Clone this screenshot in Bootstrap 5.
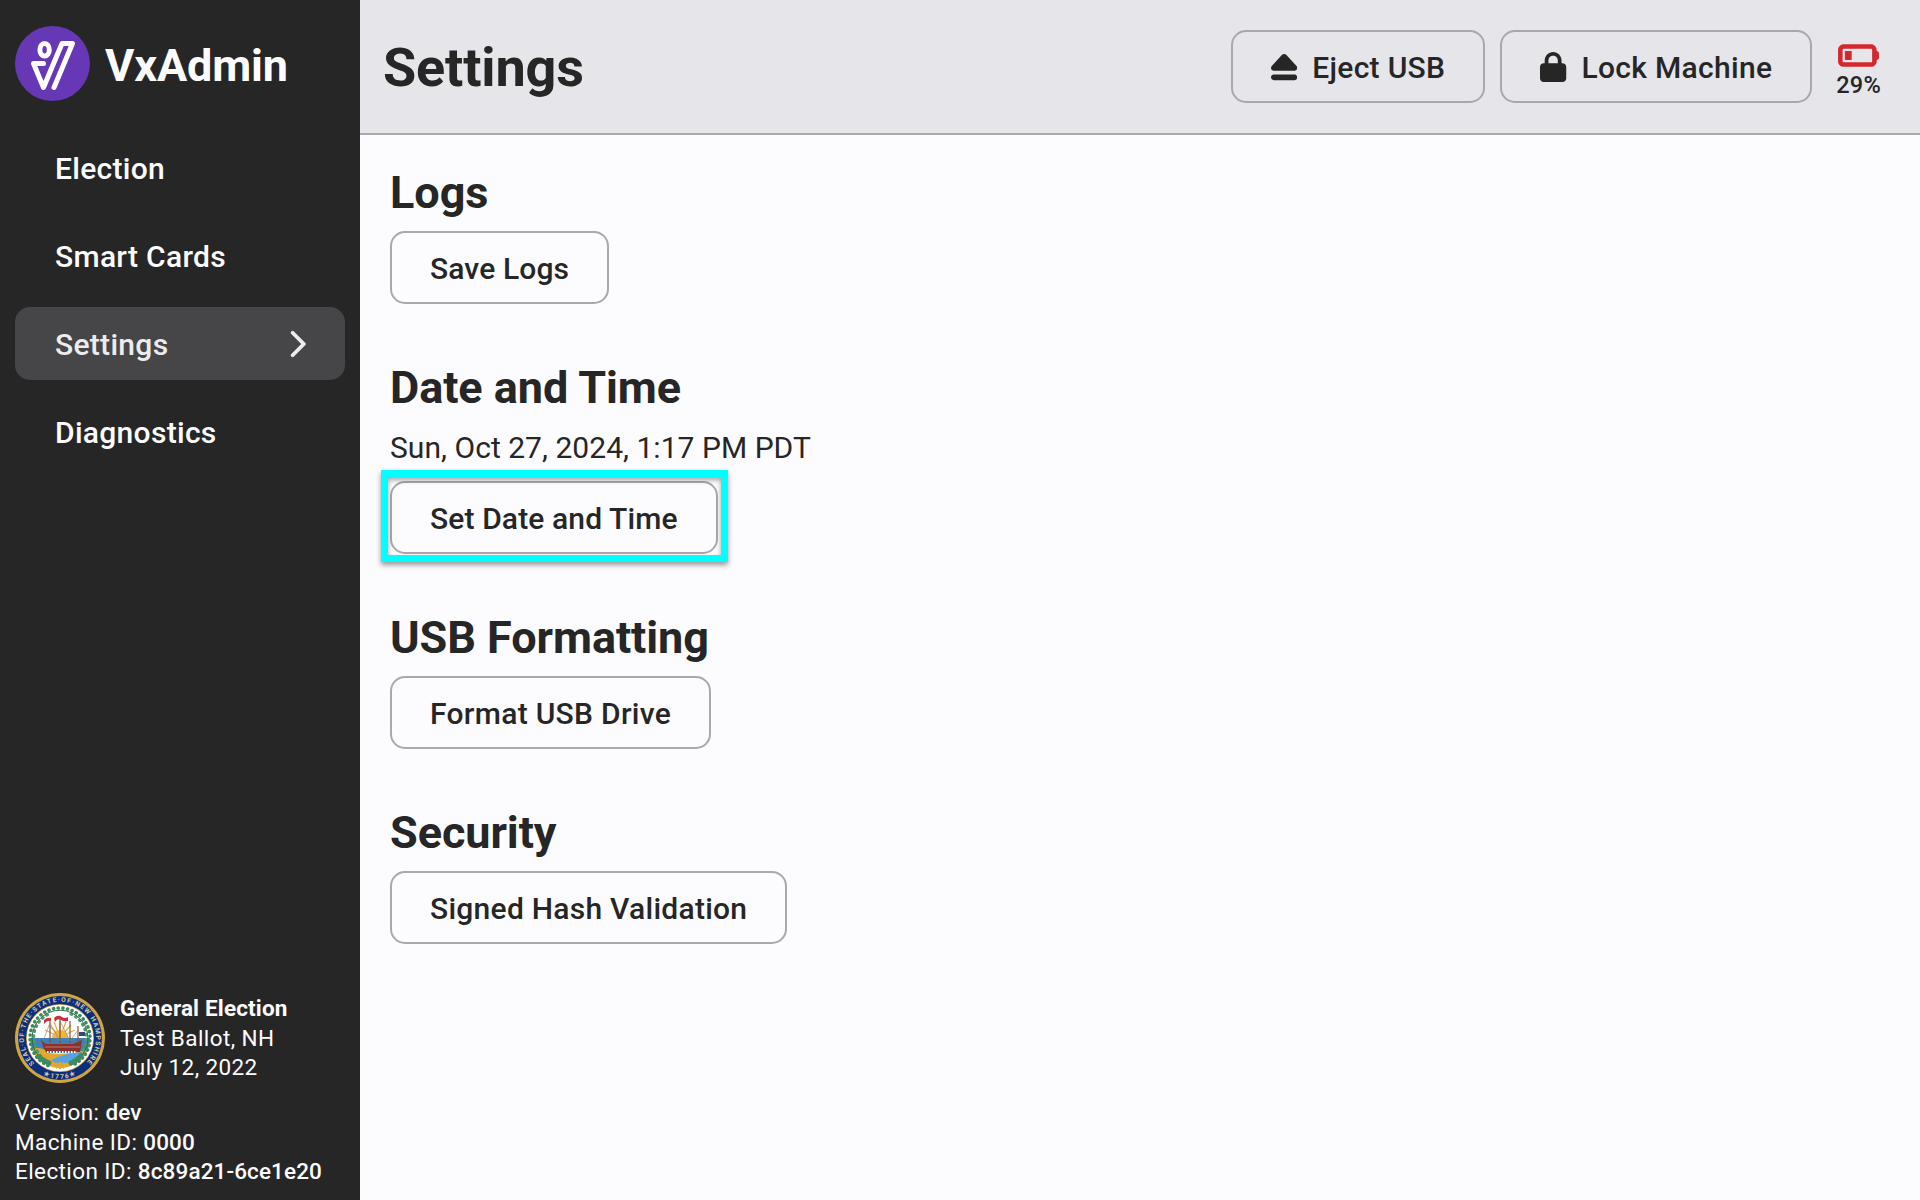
<!DOCTYPE html>
<html lang="en">
<head>
<meta charset="utf-8">
<meta name="viewport" content="width=device-width, initial-scale=1">
<title>VxAdmin - Settings</title>
<link href="https://cdn.jsdelivr.net/npm/bootstrap@5.3.0/dist/css/bootstrap.min.css" rel="stylesheet">
<style>
  body { font-family: Roboto, "Liberation Sans", sans-serif; font-size: 30px; line-height: 1.3; letter-spacing: .01em; color: #262626; background: #fcfcff; }
  svg { display: block; flex: none; }
  .side-bar { width: 360px; background: #262626; color: #fcfcff; padding: 26px 15px 0; }
  .brand-row { gap: 15px; height: 75px; }
  .brand-name { font-size: 45px; font-weight: 700; line-height: 54px; letter-spacing: -.15px; padding-top: 4px; }
  .side-nav { gap: 15px; margin-top: 30px; }
  .side-nav .nav-link { height: 73px; padding: 0 39px 0 40px; border-radius: 15px; color: #fcfcff; font-weight: 500; }
  .side-nav .nav-link.active { background: #464648; color: #ececee; }
  .btn-label { padding-top: 2px; }
  .side-foot { font-size: 22.5px; line-height: 29.25px; letter-spacing: .018em; padding-bottom: 14px; }
  .side-foot .fw-semi { font-weight: 500; letter-spacing: .005em; }
  .side-foot .fw-bold { letter-spacing: .007em; }
  .election-row { gap: 15px; margin-bottom: 15px; }
  .top-bar { height: 135px; background: #e6e5ea; border-bottom: 2px solid #a8a8ad; padding: 0 39px 0 23px; }
  .top-bar h1 { font-size: 54px; font-weight: 700; line-height: 65px; letter-spacing: -.15px; padding-top: 2px; }
  .top-tools { gap: 15px; }
  .btn-vx { --bs-btn-color: #262626; --bs-btn-border-color: #a8a8ad; --bs-btn-border-width: 2px; --bs-btn-border-radius: 15px; --bs-btn-font-size: 30px; --bs-btn-font-weight: 500; --bs-btn-padding-y: 0; --bs-btn-padding-x: 38px; --bs-btn-hover-color: #262626; --bs-btn-hover-border-color: #a8a8ad; height: 73px; gap: 15px; letter-spacing: .01em; }
  .btn-vx.tracking-tight { letter-spacing: .12px; }
  .btn-vx.tracking-mid { letter-spacing: .26px; }
  .battery { font-size: 23.5px; font-weight: 500; line-height: 26px; margin-left: 9px; padding-top: 7px; gap: 4px; letter-spacing: .01em; }
  .content { padding: 30px; }
  .content h2 { font-size: 45px; font-weight: 700; line-height: 54px; letter-spacing: -.06px; padding-top: 1px; margin-bottom: 11px; }
  .content section { margin-bottom: 56px; }
  .date-line { padding-top: 2px; margin-bottom: 14px; letter-spacing: .04px; }
  .highlight-box { inset: -11px -10px -8px -9px; border: 7px solid #0ff; box-shadow: 0 3px 5px rgba(0,0,0,.4), inset 0 3px 5px rgba(0,0,0,.35); pointer-events: none; }
  .ring-text { font: 700 6.6px Roboto, sans-serif; fill: #d5c9a0; letter-spacing: 0; }
</style>
</head>
<body>
<div class="d-flex vh-100 overflow-hidden">
  <aside class="side-bar d-flex flex-column flex-shrink-0">
    <div class="brand-row d-flex align-items-center">
      <svg width="75" height="75" viewBox="0 0 75 75">
        <circle cx="37.5" cy="37.5" r="37.5" fill="#6638b6"/>
        <g fill="none" stroke="#fff" stroke-width="5" stroke-linejoin="round" stroke-linecap="round">
          <ellipse cx="29.6" cy="23.8" rx="4.7" ry="6.3"/>
          <path d="M28.500 37.500H18.500L28.500 61.500L47 17.500H57.500L39 61.500"/>
        </g>
      </svg>
      <div class="brand-name">VxAdmin</div>
    </div>
    <nav class="side-nav nav flex-column">
      <a class="nav-link d-flex align-items-center" href="#"><span class="btn-label">Election</span></a>
      <a class="nav-link d-flex align-items-center" href="#"><span class="btn-label">Smart Cards</span></a>
      <a class="nav-link active d-flex align-items-center justify-content-between" href="#"><span class="btn-label">Settings</span>
        <svg width="18.75" height="30" viewBox="0 0 320 512" fill="currentColor"><path d="M310.6 233.4c12.5 12.5 12.5 32.8 0 45.3l-192 192c-12.5 12.5-32.8 12.5-45.3 0s-12.5-32.8 0-45.3L242.7 256 73.4 86.6c-12.5-12.5-12.5-32.8 0-45.3s32.8-12.5 45.3 0l192 192z"/></svg>
      </a>
      <a class="nav-link d-flex align-items-center" href="#"><span class="btn-label">Diagnostics</span></a>
    </nav>
    <div class="side-foot mt-auto">
      <div class="election-row d-flex align-items-center">
        <svg width="90" height="90" viewBox="0 0 90 90">
          <defs>
            <path id="ringPath" d="M19.500 70.500A36.100 36.100 0 1 1 70.500 70.500"/>
            <path id="yearPath" d="M28 82A41 41 0 0 0 62 82"/>
            <clipPath id="sealClip"><circle cx="45" cy="45" r="30"/></clipPath>
          </defs>
          <circle cx="45" cy="45" r="45" fill="#d2a544"/>
          <circle cx="45" cy="45" r="42" fill="#0c2f7c"/>
          <circle cx="45" cy="45" r="34" fill="#d2a544"/>
          <circle cx="45" cy="45" r="33.300" fill="#fff"/>
          <g clip-path="url(#sealClip)">
            <path d="M12 45H78V60H12z" fill="#3f7fb4"/>
            <path d="M12 57Q26 52 34 60Q50 63 78 55V80H12z" fill="#e2a72e"/>
            <path d="M36 67Q50 60 66 59Q62 69 50 70Q40 71 36 67z" fill="#58a2e4"/>
            <g stroke="#e2b04a" stroke-width="1.300"><path d="M45 44V28M45 44L39 29M45 44L51 29M45 44L34 32M45 44L56 32M45 44L30 37M45 44L60 37"/></g>
            <path d="M37 45a8 8 0 0 1 16 0z" fill="#efb63a"/>
          </g>
          <g fill="none" stroke-linecap="round">
            <path d="M33 72.500A30 30 0 1 1 57 72.500" stroke="#3c8a5e" stroke-width="3.600" stroke-dasharray=".1 4.600"/>
            <path d="M34 69A26.500 26.500 0 0 1 34 21M56 21A26.500 26.500 0 0 1 56 69" stroke="#4f9a6c" stroke-width="3" stroke-dasharray="1 4.200"/>
            <path d="M33 70.500A28 28 0 1 1 57 70.500" stroke="#2a6f4b" stroke-width="1"/>
            <path d="M24 64Q28 68 34 70M56 70Q62 68 66 63" stroke="#3c8a5e" stroke-width="5"/>
          </g>
          <path d="M26 47L31 51H58L67 47L65 59H31Q28 54 26 47z" fill="#8f2f2c"/>
          <path d="M30 54H65" stroke="#c98d85" stroke-width=".8"/>
          <path d="M35 50V27M45 50V24M55 50V28M63 48V33" stroke="#7d4a38" stroke-width="1.100"/>
          <path d="M28 48L35 30L45 48L45 28L55 48L63 37" fill="none" stroke="#a17461" stroke-width=".6"/>
          <path d="M29 31V27Q32 24 36 25V28Q32 27 29 31zM39 25Q43 21 47 24Q50 26 53 24V28Q49 29 46 27Q42 25 40 29z" fill="#c8303a"/>
          <path d="M64 39H70V43H64z" fill="#34467f"/>
          <path d="M32 59H62" stroke="#fff" stroke-width="2" stroke-dasharray="1.500 1.500"/>
          <path d="M41 70L49 75M49 70L41 75M45 69V76" stroke="#e2a72e" stroke-width="2"/>
          <text class="ring-text"><textPath href="#ringPath" textLength="168" lengthAdjust="spacing">SEAL·OF·THE·STATE·OF·NEW HAMPSHIRE</textPath></text>
          <text class="ring-text"><textPath href="#yearPath" textLength="34" lengthAdjust="spacing">★1776★</textPath></text>
        </svg>
        <div>
          <div class="fw-bold">General Election</div>
          <div>Test Ballot, NH</div>
          <div>July 12, 2022</div>
        </div>
      </div>
      <div>Version: <span class="fw-semi">dev</span></div>
      <div>Machine ID: <span class="fw-semi">0000</span></div>
      <div>Election ID: <span class="fw-semi">8c89a21-6ce1e20</span></div>
    </div>
  </aside>
  <main class="flex-grow-1">
    <header class="top-bar d-flex align-items-center justify-content-between">
      <h1 class="mb-0">Settings</h1>
      <div class="top-tools d-flex align-items-center">
        <button type="button" class="btn btn-vx d-flex align-items-center">
          <svg width="26.250" height="30" viewBox="0 0 448 512" fill="currentColor"><path d="M224 32c13.500 0 26.300 5.600 35.400 15.600l176 192c12.900 14 16.200 34.300 8.600 51.800S419 320 400 320H48c-19 0-36.300-11.200-43.900-28.700s-4.300-37.700 8.600-51.800l176-192C197.700 37.600 210.500 32 224 32zM0 432c0-26.500 21.500-48 48-48H400c26.500 0 48 21.500 48 48s-21.500 48-48 48H48c-26.500 0-48-21.500-48-48z"/></svg>
          <span class="btn-label">Eject USB</span>
        </button>
        <button type="button" class="btn btn-vx d-flex align-items-center">
          <svg width="26.250" height="30" viewBox="0 0 448 512" fill="currentColor"><path d="M144 144v48H304V144c0-44.200-35.800-80-80-80s-80 35.800-80 80zM80 192V144C80 64.500 144.500 0 224 0s144 64.500 144 144v48h16c35.300 0 64 28.700 64 64V448c0 35.300-28.700 64-64 64H64c-35.300 0-64-28.700-64-64V256c0-35.300 28.700-64 64-64H80z"/></svg>
          <span class="btn-label">Lock Machine</span>
        </button>
        <div class="battery d-flex flex-column align-items-center">
          <svg width="41" height="25" viewBox="0 80 576 352" fill="#d5282e"><path d="M80 96C35.800 96 0 131.800 0 176V336c0 44.200 35.800 80 80 80H464c44.200 0 80-35.800 80-80V320c17.700 0 32-14.300 32-32V224c0-17.700-14.300-32-32-32V176c0-44.200-35.800-80-80-80H80zM480 176V336c0 8.800-7.200 16-16 16H80c-8.800 0-16-7.200-16-16V176c0-8.800 7.200-16 16-16H464c8.800 0 16 7.200 16 16zM192 192H96V320h96V192z"/></svg>
          <span>29%</span>
        </div>
      </div>
    </header>
    <div class="content">
      <section>
        <h2>Logs</h2>
        <button type="button" class="btn btn-vx tracking-tight d-flex align-items-center"><span class="btn-label">Save Logs</span></button>
      </section>
      <section>
        <h2>Date and Time</h2>
        <div class="date-line">Sun, Oct 27, 2024, 1:17 PM PDT</div>
        <div class="d-flex">
          <div class="position-relative">
            <button type="button" class="btn btn-vx tracking-tight d-flex align-items-center"><span class="btn-label">Set Date and Time</span></button>
            <div class="highlight-box position-absolute"></div>
          </div>
        </div>
      </section>
      <section>
        <h2>USB Formatting</h2>
        <button type="button" class="btn btn-vx d-flex align-items-center"><span class="btn-label">Format USB Drive</span></button>
      </section>
      <section>
        <h2>Security</h2>
        <button type="button" class="btn btn-vx tracking-mid d-flex align-items-center"><span class="btn-label">Signed Hash Validation</span></button>
      </section>
    </div>
  </main>
</div>
<script src="https://cdn.jsdelivr.net/npm/bootstrap@5.3.0/dist/js/bootstrap.bundle.min.js"></script>
</body>
</html>
